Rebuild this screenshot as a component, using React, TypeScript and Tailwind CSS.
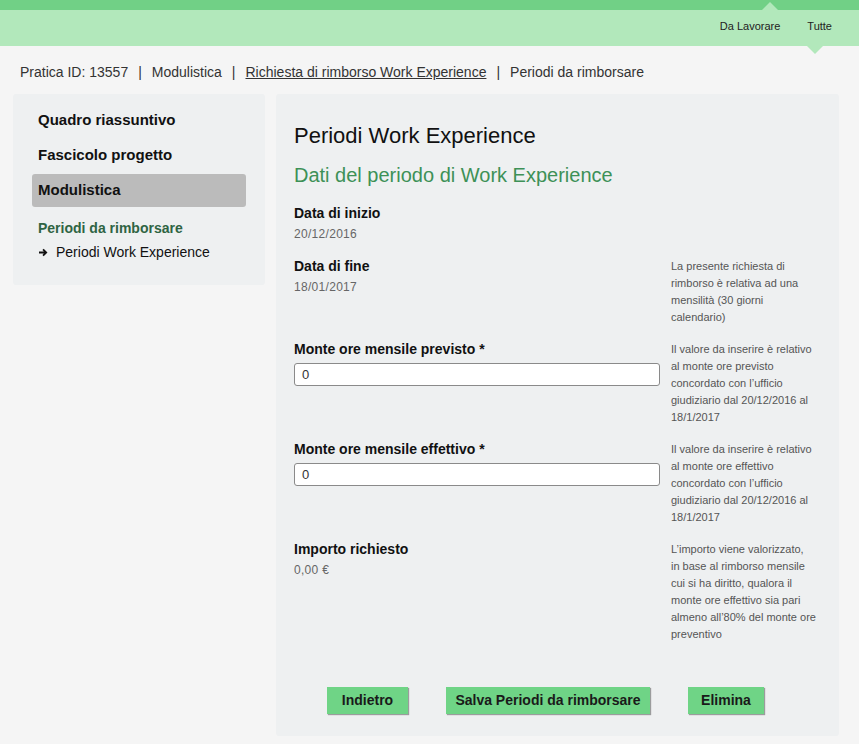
import React from 'react';

const font = { fontFamily: '"Liberation Sans", Arial, sans-serif' };

const notes = {
    fine: ['La presente richiesta di', 'rimborso è relativa ad una', 'mensilità (30 giorni', 'calendario)'],
    previsto: ['Il valore da inserire è relativo', 'al monte ore previsto', 'concordato con l’ufficio', 'giudiziario dal 20/12/2016 al', '18/1/2017'],
    effettivo: ['Il valore da inserire è relativo', 'al monte ore effettivo', 'concordato con l’ufficio', 'giudiziario dal 20/12/2016 al', '18/1/2017'],
    importo: ['L’importo viene valorizzato,', 'in base al rimborso mensile', 'cui si ha diritto, qualora il', 'monte ore effettivo sia pari', 'almeno all’80% del monte ore', 'preventivo'],
};

function Note({ lines }: { lines?: string[] }) {
    if (!lines) return <div />;
    return (
        <div className="text-[11px] leading-[17px] text-[#555] whitespace-nowrap">
            {lines.map((l, i) => (
                <div key={i}>{l}</div>
            ))}
        </div>
    );
}

function Row({ label, children, note }: { label: string; children: React.ReactNode; note?: string[] }) {
    return (
        <div className="grid grid-cols-[366px_1fr] gap-x-[11px]">
            <div>
                <div className="text-[14px] leading-[17px] font-bold text-[#111]">{label}</div>
                {children}
            </div>
            <Note lines={note} />
        </div>
    );
}

function Value({ text }: { text: string }) {
    return <div className="mt-[4px] text-[12px] leading-[17px] text-[#666] tracking-[0.3px]">{text}</div>;
}

function Input() {
    return (
        <div className="mt-[5px] h-[23px] bg-white border border-[#8a8a8a] rounded-[3px] px-[7px] flex items-center text-[13px] text-[#333]">
            0
        </div>
    );
}

function Btn({ label, w }: { label: string; w: string }) {
    return (
        <button className={`${w} h-[27px] bg-[#6fd486] text-[14px] font-bold text-[#1a1a1a] shadow-[1px_1px_1px_rgba(0,0,0,0.35)]`}>
            {label}
        </button>
    );
}

export default function App() {
    const sideItems = ['Quadro riassuntivo', 'Fascicolo progetto', 'Modulistica'];

    return (
        <div className="min-h-[744px] bg-[#f5f5f5] text-[#222]" style={font}>
            {/* header */}
            <header className="relative">
                <div className="h-[10px] bg-[#71d086]" />
                <div className="h-[36px] bg-[#b2e8bb] flex items-center justify-end pr-[27px] pb-[4px] gap-[27px] text-[11px] text-[#222]">
                    <span>Da Lavorare</span>
                    <span>Tutte</span>
                </div>
                <div className="absolute left-[762px] top-[2px] w-0 h-0 border-l-[8px] border-r-[8px] border-b-[8px] border-l-transparent border-r-transparent border-b-[#b2e8bb]" />
                <div className="absolute left-[807px] top-[46px] w-0 h-0 border-l-[8px] border-r-[8px] border-t-[8px] border-l-transparent border-r-transparent border-t-[#b2e8bb]" />
            </header>

            {/* breadcrumb */}
            <nav className="px-[20px] pt-[18px] pb-[13px] text-[14px] leading-[17px] text-[#333] flex">
                <span>Pratica ID: 13557</span>
                <span className="mx-[10px]">|</span>
                <span>Modulistica</span>
                <span className="mx-[10px]">|</span>
                <span className="underline">Richiesta di rimborso Work Experience</span>
                <span className="mx-[10px]">|</span>
                <span>Periodi da rimborsare</span>
            </nav>

            <div className="flex gap-[11px] pl-[13px] pr-[20px]">
                {/* sidebar */}
                <aside className="w-[252px] self-start bg-[#eef0f1] rounded-[3px] px-[19px] pt-[10px] pb-[24px]">
                    <ul className="flex flex-col gap-[2px]">
                        {sideItems.map(item => (
                            <li
                                key={item}
                                className={`h-[33px] px-[6px] flex items-center text-[15px] font-bold text-[#111] rounded-[3px] ${
                                    item === 'Modulistica' ? 'bg-[#bbbbbb]' : ''
                                }`}
                            >
                                {item}
                            </li>
                        ))}
                    </ul>
                    <div className="px-[6px] mt-[13px] text-[14px] leading-[17px] font-bold text-[#2f6443]">Periodi da rimborsare</div>
                    <div className="px-[7px] mt-[7px] flex items-center gap-[8px] text-[14px] leading-[17px] text-[#111]">
                        <svg width="9" height="9" viewBox="0 0 10 10">
                            <path d="M0 5h7M4.5 1.5L8 5 4.5 8.5" stroke="#111" strokeWidth="2" fill="none" />
                        </svg>
                        <span>Periodi Work Experience</span>
                    </div>
                </aside>

                {/* main */}
                <main className="flex-1 bg-[#eef0f1] rounded-[3px] px-[18px] pt-[28px] pb-[22px] min-h-[642px]">
                    <h1 className="text-[22px] leading-[28px] text-[#111]">Periodi Work Experience</h1>
                    <h2 className="mt-[12px] text-[20px] leading-[26px] text-[#3d9157]">Dati del periodo di Work Experience</h2>

                    <div className="mt-[17px] flex flex-col gap-[15px]">
                        <Row label="Data di inizio">
                            <Value text="20/12/2016" />
                        </Row>
                        <Row label="Data di fine" note={notes.fine}>
                            <Value text="18/01/2017" />
                        </Row>
                        <Row label="Monte ore mensile previsto *" note={notes.previsto}>
                            <Input />
                        </Row>
                        <Row label="Monte ore mensile effettivo *" note={notes.effettivo}>
                            <Input />
                        </Row>
                        <Row label="Importo richiesto" note={notes.importo}>
                            <Value text="0,00 €" />
                        </Row>
                    </div>

                    <div className="mt-[44px] flex gap-[38px] pl-[33px]">
                        <Btn label="Indietro" w="w-[81px]" />
                        <Btn label="Salva Periodi da rimborsare" w="w-[204px]" />
                        <Btn label="Elimina" w="w-[76px]" />
                    </div>
                </main>
            </div>
        </div>
    );
}
